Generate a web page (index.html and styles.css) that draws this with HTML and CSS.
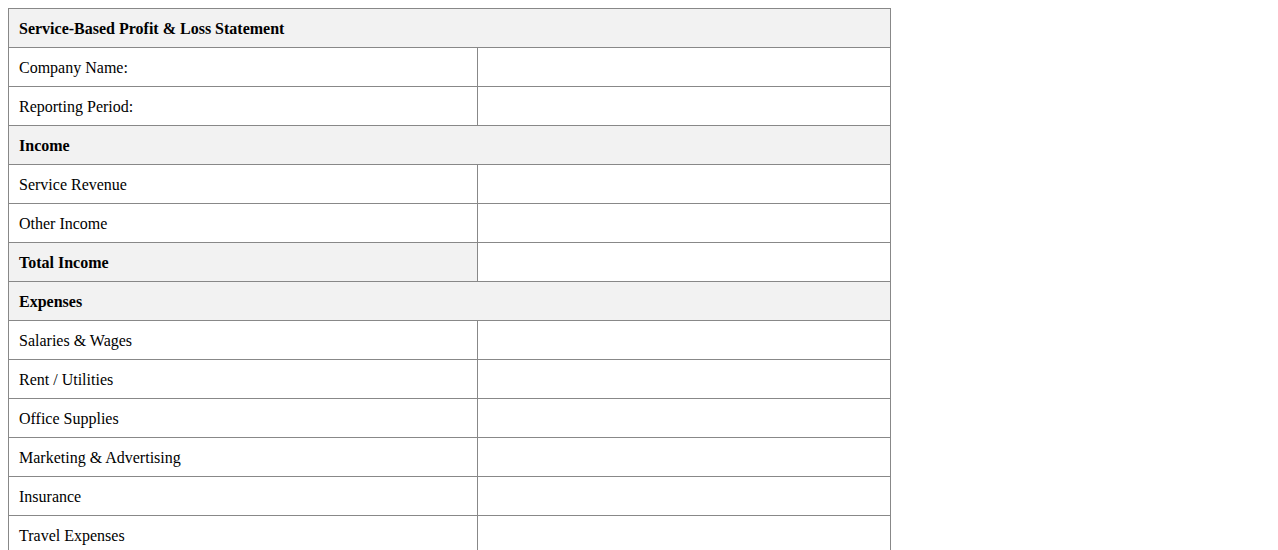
FILE: index.html
```html
<!DOCTYPE html>
<html>
<head>
<meta charset="utf-8">
<link rel="stylesheet" href="styles.css">
</head>
<body>
<table class="pl">
  <colgroup><col class="c1"><col class="c2"></colgroup>
  <tr><th colspan="2" class="hd">Service-Based Profit &amp; Loss Statement</th></tr>
  <tr><td>Company Name:</td><td></td></tr>
  <tr><td>Reporting Period:</td><td></td></tr>
  <tr><th colspan="2" class="hd">Income</th></tr>
  <tr><td>Service Revenue</td><td></td></tr>
  <tr><td>Other Income</td><td></td></tr>
  <tr><th class="hd">Total Income</th><td></td></tr>
  <tr><th colspan="2" class="hd">Expenses</th></tr>
  <tr><td>Salaries &amp; Wages</td><td></td></tr>
  <tr><td>Rent / Utilities</td><td></td></tr>
  <tr><td>Office Supplies</td><td></td></tr>
  <tr><td>Marketing &amp; Advertising</td><td></td></tr>
  <tr><td>Insurance</td><td></td></tr>
  <tr><td>Travel Expenses</td><td></td></tr>
  <tr><td>Professional Fees</td><td></td></tr>
  <tr><td>Other Expenses</td><td></td></tr>
</table>
</body>
</html>
```
FILE: styles.css
```css
body {
  margin: 8px;
  font-family: "Liberation Serif", "Times New Roman", serif;
  font-size: 16px;
  color: #000;
  background: #fff;
}
.pl {
  border-collapse: collapse;
  width: 883px;
  table-layout: fixed;
}
.c1 { width: 469px; }
.pl th, .pl td {
  border: 1px solid #888;
  padding: 11px 10px 9px;
  text-align: left;
  height: 18px;
  line-height: 18px;
}
.pl .hd {
  background: #f2f2f2;
  font-weight: bold;
}
```
